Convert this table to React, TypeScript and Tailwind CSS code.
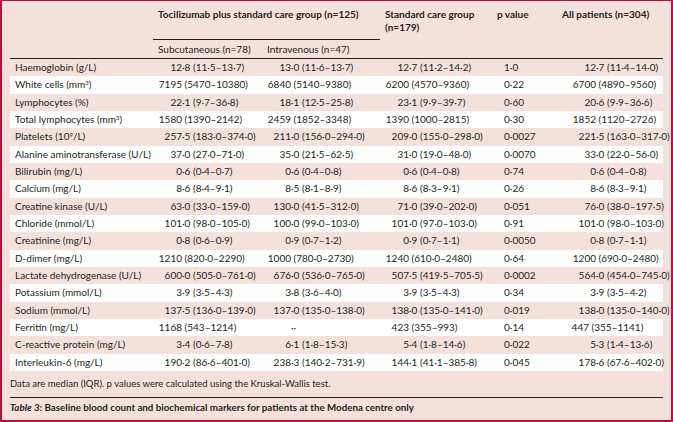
import React from 'react';

type Row = [string, string, string, string, string, string];

const rows: Row[] = [
  ['Haemoglobin (g/L)', '12·8 (11·5–13·7)', '13·0 (11·6–13·7)', '12·7 (11·2–14·2)', '1·0', '12·7 (11·4–14·0)'],
  ['White cells (mm³)', '7195 (5470–10380)', '6840 (5140–9380)', '6200 (4570–9360)', '0·22', '6700 (4890–9560)'],
  ['Lymphocytes (%)', '22·1 (9·7–36·8)', '18·1 (12·5–25·8)', '23·1 (9·9–39·7)', '0·60', '20·6 (9·9–36·6)'],
  ['Total lymphocytes (mm³)', '1580 (1390–2142)', '2459 (1852–3348)', '1390 (1000–2815)', '0·30', '1852 (1120–2726)'],
  ['Platelets (10⁹/L)', '257·5 (183·0–374·0)', '211·0 (156·0–294·0)', '209·0 (155·0–298·0)', '0·0027', '221·5 (163·0–317·0)'],
  ['Alanine aminotransferase (U/L)', '37·0 (27·0–71·0)', '35·0 (21·5–62·5)', '31·0 (19·0–48·0)', '0·0070', '33·0 (22·0–56·0)'],
  ['Bilirubin (mg/L)', '0·6 (0·4–0·7)', '0·6 (0·4–0·8)', '0·6 (0·4–0·8)', '0·74', '0·6 (0·4–0·8)'],
  ['Calcium (mg/L)', '8·6 (8·4–9·1)', '8·5 (8·1–8·9)', '8·6 (8·3–9·1)', '0·26', '8·6 (8·3–9·1)'],
  ['Creatine kinase (U/L)', '63·0 (33·0–159·0)', '130·0 (41·5–312·0)', '71·0 (39·0–202·0)', '0·051', '76·0 (38·0–197·5)'],
  ['Chloride (mmol/L)', '101·0 (98·0–105·0)', '100·0 (99·0–103·0)', '101·0 (97·0–103·0)', '0·91', '101·0 (98·0–103·0)'],
  ['Creatinine (mg/L)', '0·8 (0·6–0·9)', '0·9 (0·7–1·2)', '0·9 (0·7–1·1)', '0·0050', '0·8 (0·7–1·1)'],
  ['D-dimer (mg/L)', '1210 (820·0–2290)', '1000 (780·0–2730)', '1240 (610·0–2480)', '0·64', '1200 (690·0–2480)'],
  ['Lactate dehydrogenase (U/L)', '600·0 (505·0–761·0)', '676·0 (536·0–765·0)', '507·5 (419·5–705·5)', '0·0002', '564·0 (454·0–745·0)'],
  ['Potassium (mmol/L)', '3·9 (3·5–4·3)', '3·8 (3·6–4·0)', '3·9 (3·5–4·3)', '0·34', '3·9 (3·5–4·2)'],
  ['Sodium (mmol/L)', '137·5 (136·0–139·0)', '137·0 (135·0–138·0)', '138·0 (135·0–141·0)', '0·019', '138·0 (135·0–140·0)'],
  ['Ferritin (mg/L)', '1168 (543–1214)', '··', '423 (355–993)', '0·14', '447 (355–1141)'],
  ['C-reactive protein (mg/L)', '3·4 (0·6–7·8)', '6·1 (1·8–15·3)', '5·4 (1·8–14·6)', '0·022', '5·3 (1·4–13·6)'],
  ['Interleukin-6 (mg/L)', '190·2 (86·6–401·0)', '238·3 (140·2–731·9)', '144·1 (41·1–385·8)', '0·045', '178·6 (67·6–402·0)'],
];

// split a value at its decimal point (or first space) so columns line up on it
function Num({ value, box }: { value: string; box: string }) {
  const m = value.match(/^(\d*)(.*)$/);
  const head = m ? m[1] : '';
  const tail = m ? m[2] : value;
  return (
    <div className="flex whitespace-pre">
      <span className={`${box} text-right shrink-0`}>{head}</span>
      <span>{tail}</span>
    </div>
  );
}

function Label({ text }: { text: string }) {
  return (
    <>
      {text.split(/([³⁹])/).map((p, k) =>
        p === '³' ? (
          <sup key={k} className="text-[6px] -top-[3px]">3</sup>
        ) : p === '⁹' ? (
          <sup key={k} className="text-[6px] -top-[3px]">9</sup>
        ) : (
          <span key={k}>{p}</span>
        )
      )}
    </>
  );
}

export default function App() {
  return (
    <div
      className="w-[673px] h-[422px] bg-[#f4e1dc] border-t border-l-2 border-r-2 border-b-2 border-[#b3133d] px-[8px] text-[#231f20] text-[10px] overflow-hidden"
      style={{ fontFamily: 'Lato, "Liberation Sans", sans-serif' }}
    >
      <div className="flex h-[58px] border-b border-[#231f20] leading-[13px]">
        <div className="w-[148px] shrink-0" />
        <div className="w-[227px] shrink-0 flex flex-col">
          <div className="h-[39px] -ml-[5px] mr-[5px] pl-[5px] pt-[7px] border-b border-[#231f20] font-bold">
            Tocilizumab plus standard care group (n=125)
          </div>
          <div className="flex pt-[3px]">
            <div className="w-[109px] shrink-0">Subcutaneous (n=78)</div>
            <div>Intravenous (n=47)</div>
          </div>
        </div>
        <div className="w-[112px] shrink-0 pt-[7px] pr-[14px] font-bold">Standard care group (n=179)</div>
        <div className="w-[65px] shrink-0 pt-[7px] font-bold">p value</div>
        <div className="flex-1 pt-[7px] font-bold">All patients (n=304)</div>
      </div>

      <div className="flex flex-col">
        {rows.map((r, i) => (
          <div
            key={r[0]}
            className={`flex items-center h-[17.33px] w-[653px] ${i % 2 === 1 ? 'bg-white' : ''}`}
          >
            <div className="w-[148px] shrink-0 pl-[5px] whitespace-nowrap">
              <Label text={r[0]} />
            </div>
            <div className="w-[109px] shrink-0">
              <Num value={r[1]} box="w-[24px]" />
            </div>
            <div className="w-[118px] shrink-0">
              <Num value={r[2]} box="w-[24px]" />
            </div>
            <div className="w-[112px] shrink-0">
              <Num value={r[3]} box="w-[24px]" />
            </div>
            <div className="w-[65px] shrink-0 pl-[7px]">{r[4]}</div>
            <div className="flex-1">
              <Num value={r[5]} box={r[0].startsWith('Ferritin') ? 'w-[27px]' : 'w-[34px]'} />
            </div>
          </div>
        ))}
      </div>

      <div className="mt-[6px] leading-[13px] text-[9.5px] pb-[7px] border-b border-[#231f20]">
        Data are median (IQR). p values were calculated using the Kruskal-Wallis test.
      </div>
      <div className="pt-[3px] leading-[13px] text-[9.75px] font-bold">
        <span className="italic">Table 3</span>: Baseline blood count and biochemical markers for patients at the Modena centre only
      </div>
    </div>
  );
}
